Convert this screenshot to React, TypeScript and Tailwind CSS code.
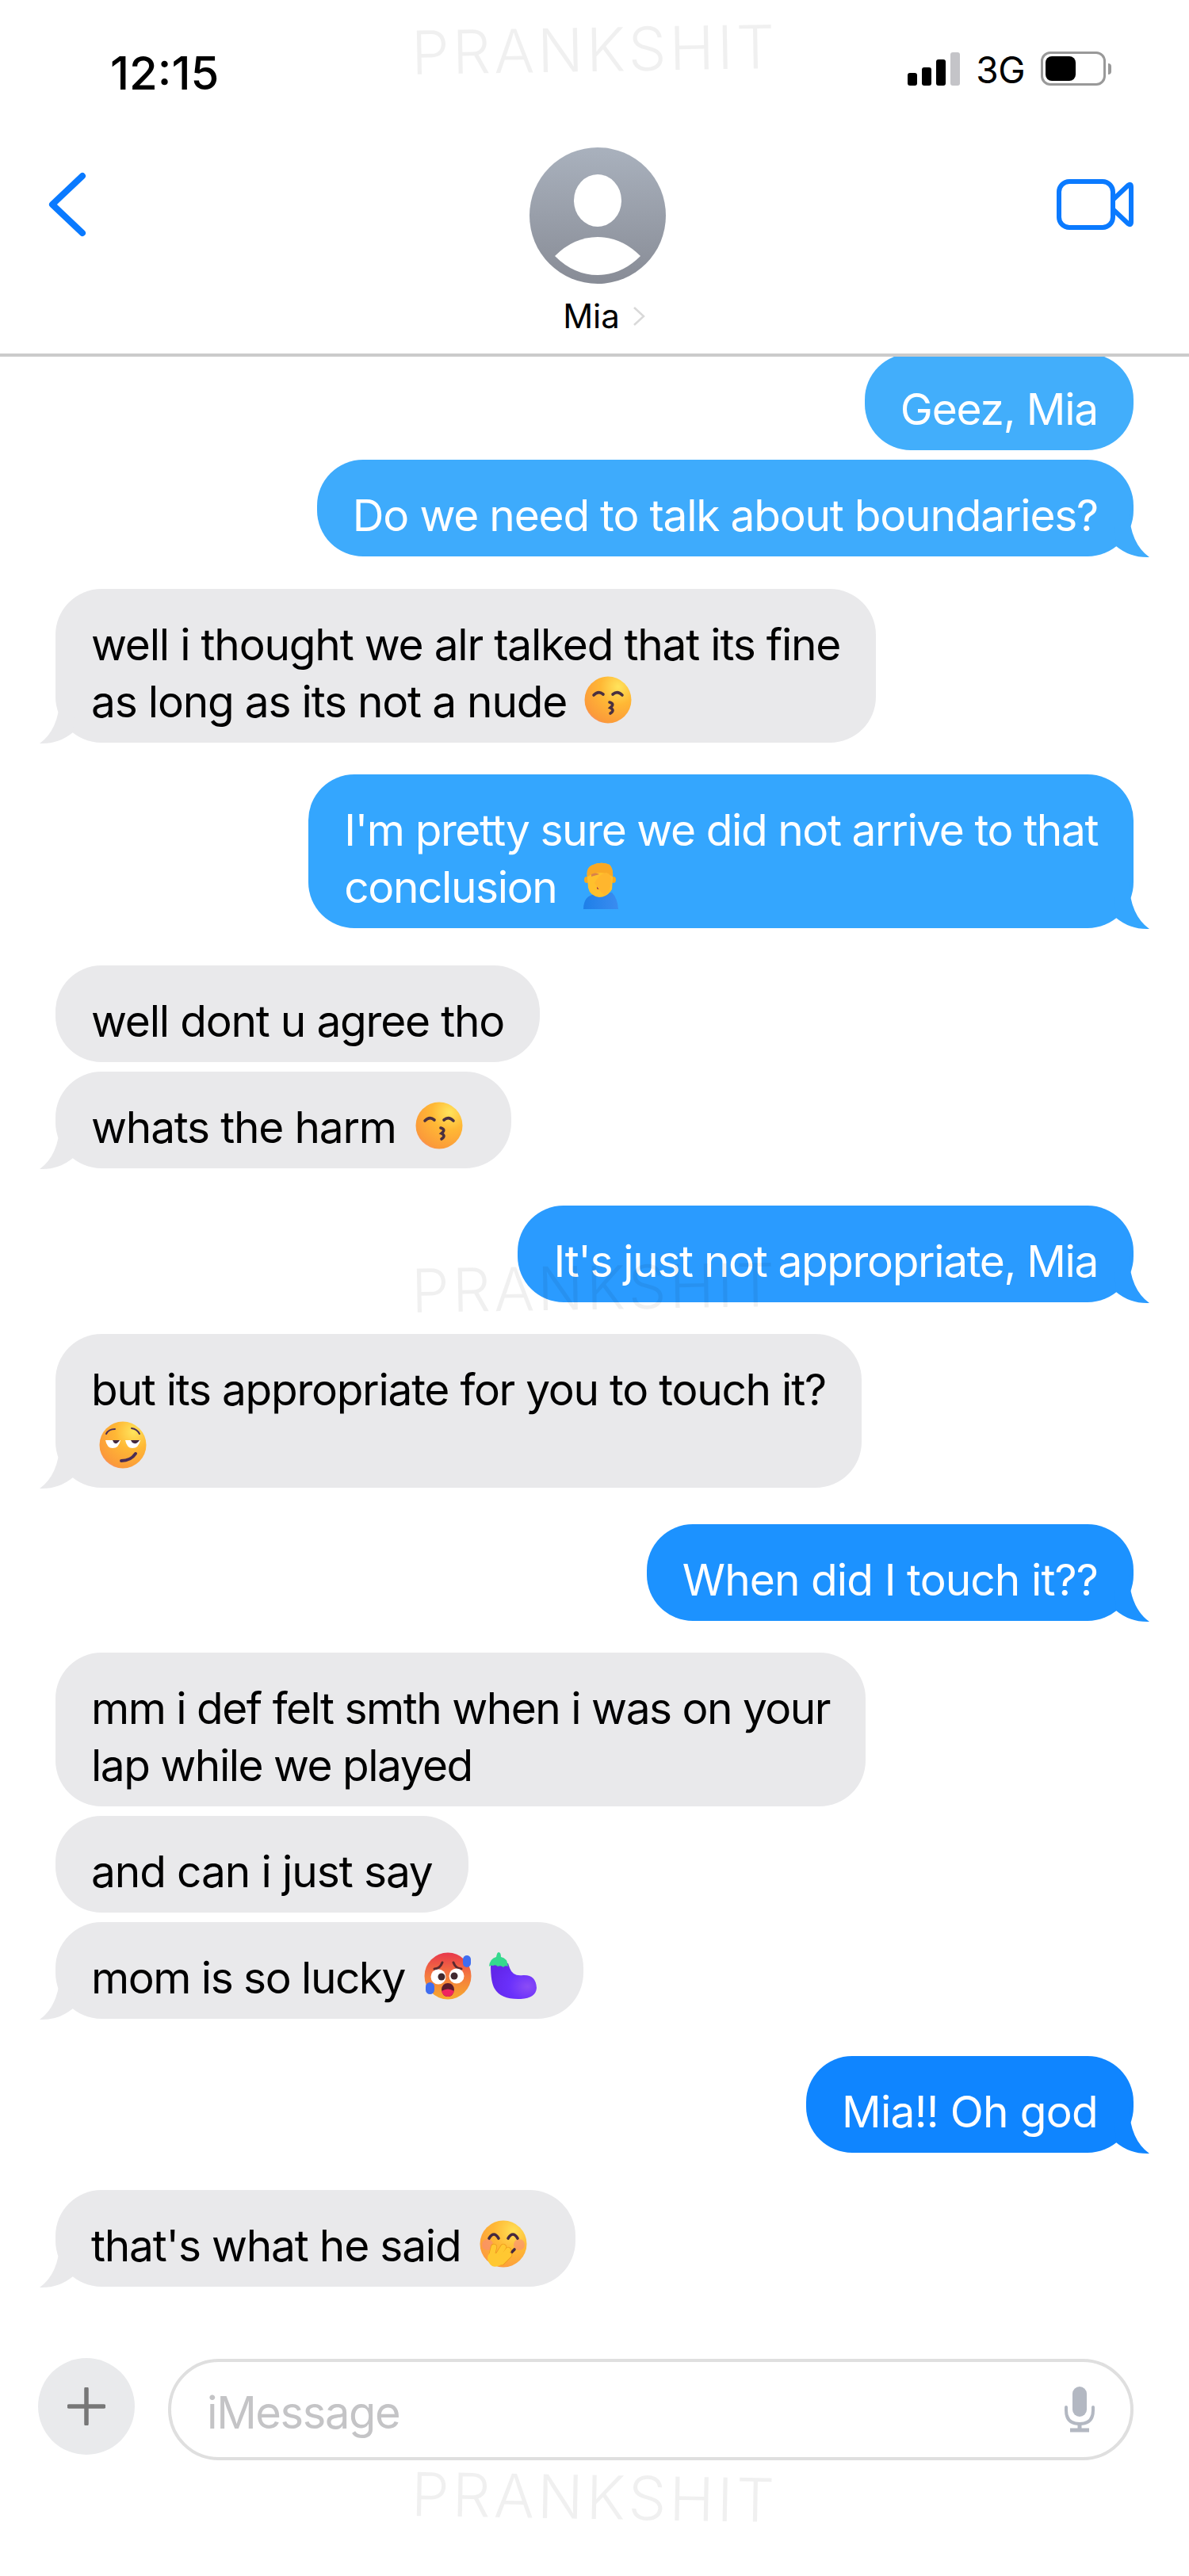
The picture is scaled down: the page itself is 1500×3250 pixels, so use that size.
import React from "react";

type Msg = {
  text: string;
  mine?: boolean;
  bg: string;
  gap: string;
  tr: string;
  tail?: boolean;
  emoji?: React.ReactNode;
};

const Face = ({ id, children }: { id: string; children: React.ReactNode }) => (
  <svg viewBox="0 0 60 60" className="inline-block w-[60px] h-[60px] align-[-8px]">
    <defs>
      <radialGradient id={id} cx="0.72" cy="0.22" r="0.95">
        <stop offset="0" stopColor="#ffe45c" />
        <stop offset="0.4" stopColor="#ffb835" />
        <stop offset="0.85" stopColor="#fb9a3a" />
        <stop offset="1" stopColor="#f47fa0" />
      </radialGradient>
    </defs>
    <circle cx="30" cy="30" r="29.5" fill={`url(#${id})`} />
    {children}
  </svg>
);

const KissFace = ({ id }: { id: string }) => (
  <Face id={id}>
    <g fill="none" stroke="#4a3040" strokeWidth="3.6" strokeLinecap="round">
      <path d="M12 24 Q18 18 24 23" />
      <path d="M36 23 Q42 18 48 24" />
      <path d="M32 33 Q39 35 33 40 Q39 43 33 47" />
    </g>
  </Face>
);

const SmirkFace = () => (
  <Face id="smirk">
    <g fill="none" stroke="#4a2d55" strokeLinecap="round">
      <path d="M9 16 Q12 10 20 10" strokeWidth="2" />
      <path d="M41 9 Q48 10 51 16" strokeWidth="2" />
      <path d="M28 50 Q40 50 46 41" strokeWidth="4" />
    </g>
    <path d="M8 24 H27 Q25 34 17 34 Q10 34 8 24Z" fill="#fff" />
    <path d="M33 24 H52 Q50 34 42 34 Q35 34 33 24Z" fill="#fff" />
    <path d="M17 24 H26 Q23 29 20 28 Q18 27 17 24Z" fill="#43283f" />
    <path d="M40 24 H51 Q48 29 44 28 Q41 27 40 24Z" fill="#43283f" />
  </Face>
);

const HandFace = () => (
  <svg viewBox="0 0 60 60" className="inline-block w-[60px] h-[60px] align-[-8px]">
    <defs>
      <radialGradient id="hand" cx="0.72" cy="0.22" r="0.95">
        <stop offset="0" stopColor="#ffdf55" />
        <stop offset="0.45" stopColor="#ffb835" />
        <stop offset="1" stopColor="#fb9440" />
      </radialGradient>
    </defs>
    <circle cx="30" cy="30" r="29.5" fill="url(#hand)" />
    <circle cx="10" cy="31" r="7" fill="#f88a78" opacity="0.6" />
    <circle cx="50" cy="31" r="7" fill="#f88a78" opacity="0.6" />
    <g fill="none" stroke="#45293f" strokeWidth="3.6" strokeLinecap="round">
      <path d="M12 23 Q18 13 24 23" />
      <path d="M36 23 Q42 13 48 23" />
      <path d="M40 41 L44 37" />
    </g>
    <g fill="none" stroke="#ee9c1e" strokeWidth="8.2" strokeLinecap="round">
      <path d="M15 46 L18 34" />
      <path d="M22 47 L30 34" />
      <path d="M26 50 L36 38" />
      <path d="M28 53 L37 44" />
    </g>
    <g fill="none" stroke="#ffc832" strokeWidth="6.6" strokeLinecap="round">
      <path d="M15 46 L18 34" />
      <path d="M22 47 L30 34" />
      <path d="M26 50 L36 38" />
      <path d="M28 53 L37 44" />
    </g>
    <path d="M10 47 Q11 40 18 41 L30 46 Q33 52 26 57 Q20 60 16 58 Q10 54 10 47Z" fill="#ffc832" />
  </svg>
);

const Facepalm = () => (
  <svg viewBox="0 0 45 59" className="inline-block w-[45px] h-[59px] align-[-8px]">
    <defs>
      <linearGradient id="shirt" x1="0" y1="0" x2="1" y2="0">
        <stop offset="0" stopColor="#1e7fe8" />
        <stop offset="1" stopColor="#3a8cf0" />
      </linearGradient>
    </defs>
    <path d="M0 59 Q0 42 15 40 L36 38 Q43 45 44 59Z" fill="url(#shirt)" />
    <ellipse cx="4" cy="22" rx="3" ry="4" fill="#f6a91f" />
    <ellipse cx="38" cy="22" rx="3" ry="4" fill="#f6a91f" />
    <path d="M5 20 Q3 8 10 4 Q22 -2 33 3 Q38 8 37 20 L36 34 Q30 44 20 44 Q8 42 6 32Z" fill="#ffc02c" />
    <path d="M5 18 Q3 8 10 4 Q22 -2 33 3 Q38 8 37 18 Q22 8 5 18Z" fill="#f9a825" />
    <path d="M10 15 Q16 12 20 15 L10 18Z" fill="#d9824a" />
    <circle cx="19" cy="32" r="2" fill="#8a1050" />
    <path d="M14 26 Q20 14 29 13 Q36 15 35 26 Q33 40 26 41 Q20 36 14 26Z" fill="#ffb62e" />
  </svg>
);

const HotFace = () => (
  <svg viewBox="0 0 60 60" className="inline-block w-[60px] h-[60px] align-[-8px]">
    <defs>
      <linearGradient id="hot" x1="0" y1="0" x2="0" y2="1">
        <stop offset="0" stopColor="#e8384c" />
        <stop offset="0.5" stopColor="#f47a3e" />
        <stop offset="1" stopColor="#f7a92e" />
      </linearGradient>
    </defs>
    <circle cx="30" cy="30" r="29.5" fill="url(#hot)" />
    <g fill="none" stroke="#5a2a30" strokeWidth="3" strokeLinecap="round">
      <path d="M13 21 Q20 21 23 13" />
      <path d="M37 13 Q40 21 47 21" />
    </g>
    <circle cx="18" cy="31" r="9.5" fill="#fff" />
    <circle cx="41" cy="30" r="9.5" fill="#fff" />
    <circle cx="22" cy="31" r="4.5" fill="#41292f" />
    <circle cx="38" cy="30" r="4.5" fill="#41292f" />
    <path d="M22 47 Q23 39 30 39 Q37 39 38 47 Q37 56 30 56 Q23 56 22 47Z" fill="#5c1c2c" />
    <path d="M22 49 Q30 44 38 49 Q36 56 30 56 Q24 56 22 49Z" fill="#f0245f" />
    <rect x="49" y="4" width="10" height="15" rx="5" fill="#3f6df0" />
    <rect x="2" y="38" width="11" height="15" rx="5.5" fill="#3f6df0" />
  </svg>
);

const Eggplant = () => (
  <svg viewBox="0 0 60 60" className="inline-block w-[60px] h-[60px] ml-[22px] mr-[14px] align-[-8px]">
    <defs>
      <radialGradient id="egg" cx="0.8" cy="0.65" r="0.8">
        <stop offset="0" stopColor="#8b4cf6" />
        <stop offset="0.5" stopColor="#6a30fb" />
        <stop offset="1" stopColor="#6226ea" />
      </radialGradient>
    </defs>
    <path d="M2 16 Q2 38 7 46 Q15 60 40 59 Q59 58 60 45 Q59 28 43 29 Q30 31 26 20 L24 14Z" fill="url(#egg)" />
    <path d="M0 18 Q1 8 9 6 Q10 0 12 0 Q15 0 15 6 Q23 7 24 18 Q20 16 18 19 Q15 16 11 18 Q8 15 5 17 Q2 16 0 18Z" fill="#35d98e" />
  </svg>
);

const gray = "bg-[#e9e9eb]";

const messages: Msg[] = [
  { text: "Geez, Mia", mine: true, bg: "bg-[#42aefb]", gap: "-mt-[4px]", tr: "tracking-[-1.2px]" },
  { text: "Do we need to talk about boundaries?", mine: true, bg: "bg-[#3eabfc]", gap: "mt-[12px]", tr: "tracking-[-1.2px]", tail: true },
  {
    text: "well i thought we alr talked that its fine\nas long as its not a nude",
    bg: gray,
    gap: "mt-[41px]",
    tr: "tracking-[-1.2px]",
    tail: true,
    emoji: <span className="ml-[22px]"><KissFace id="kiss1" /></span>,
  },
  {
    text: "I'm pretty sure we did not arrive to that\nconclusion",
    mine: true,
    bg: "bg-[#34a6fe]",
    gap: "mt-[40px]",
    tr: "tracking-[-1.4px]",
    tail: true,
    emoji: <span className="ml-[34px]"><Facepalm /></span>,
  },
  { text: "well dont u agree tho", bg: gray, gap: "mt-[47px]", tr: "tracking-[-1.2px]" },
  {
    text: "whats the harm",
    bg: gray,
    gap: "mt-[12px]",
    tr: "tracking-[-1.2px]",
    tail: true,
    emoji: <span className="ml-[24px] mr-[16px]"><KissFace id="kiss2" /></span>,
  },
  { text: "It's just not appropriate, Mia", mine: true, bg: "bg-[#2a9bff]", gap: "mt-[47px]", tr: "tracking-[-1.35px]", tail: true },
  {
    text: "but its appropriate for you to touch it?\n",
    bg: gray,
    gap: "mt-[40px]",
    tr: "tracking-[-1.25px]",
    tail: true,
    emoji: <span className="ml-[10px]"><SmirkFace /></span>,
  },
  { text: "When did I touch it??", mine: true, bg: "bg-[#1c92ff]", gap: "mt-[46px]", tr: "tracking-[-0.9px]", tail: true },
  { text: "mm i def felt smth when i was on your\nlap while we played", bg: gray, gap: "mt-[40px]", tr: "tracking-[-1.5px]" },
  { text: "and can i just say", bg: gray, gap: "mt-[12px]", tr: "tracking-[-1.1px]" },
  {
    text: "mom is so lucky",
    bg: gray,
    gap: "mt-[12px]",
    tr: "tracking-[-1.5px]",
    tail: true,
    emoji: (
      <>
        <span className="ml-[24px]"><HotFace /></span>
        <Eggplant />
      </>
    ),
  },
  { text: "Mia!! Oh god", mine: true, bg: "bg-[#0f85ff]", gap: "mt-[47px]", tr: "tracking-[-0.7px]", tail: true },
  {
    text: "that's what he said",
    bg: gray,
    gap: "mt-[47px]",
    tr: "tracking-[-1.2px]",
    tail: true,
    emoji: <span className="ml-[24px] mr-[16px]"><HandFace /></span>,
  },
];

const tailFill: Record<string, string> = {
  "bg-[#3eabfc]": "#3eabfc",
  "bg-[#34a6fe]": "#34a6fe",
  "bg-[#2a9bff]": "#2a9bff",
  "bg-[#1c92ff]": "#1c92ff",
  "bg-[#0f85ff]": "#0f85ff",
  "bg-[#e9e9eb]": "#e9e9eb",
};

const Watermark = ({ className }: { className: string }) => (
  <div className={`absolute left-[519px] text-[76px] leading-none font-light tracking-[4px] text-black/[0.06] pointer-events-none ${className}`}>
    PRANKSHIT
  </div>
);

const Bubble = ({ msg }: { msg: Msg }) => (
  <div className={`relative ${msg.gap} ${msg.mine ? "self-end" : "self-start"}`}>
    <div
      className={`rounded-[58px] px-[45px] pt-[34px] pb-[16px] text-[55px] leading-[72px] whitespace-pre ${msg.tr} ${msg.bg} ${msg.mine ? "text-white" : "text-black"}`}
    >
      {msg.text}
      {msg.emoji}
    </div>
    {msg.tail && (
      <svg
        viewBox="0 0 50 60"
        className={`absolute bottom-[-2px] w-[50px] h-[60px] ${msg.mine ? "right-[-20px]" : "left-[-20px] -scale-x-100"}`}
      >
        <path d="M24 0 Q26 42 50 59 Q26 60 8 45 L6 20Z" fill={tailFill[msg.bg]} />
      </svg>
    )}
  </div>
);

const Header = () => (
  <header className="shrink-0">
    {/* status bar */}
    <div className="h-[170px] flex items-start justify-between pl-[139px] pr-[98px] pt-[60px]">
      <span className="text-[58px] leading-[64px] font-medium">12:15</span>
      <div className="flex items-end mt-[4px]">
        <div className="flex items-end gap-[6px]">
          <div className="w-[12px] h-[16px] rounded-[3px] bg-black" />
          <div className="w-[12px] h-[23px] rounded-[3px] bg-black" />
          <div className="w-[12px] h-[33px] rounded-[3px] bg-black" />
          <div className="w-[12px] h-[42px] rounded-[3px] bg-[#c4c4c8]" />
        </div>
        <span className="ml-[20px] text-[46px] leading-[44px] tracking-[-0.5px] translate-y-[2px]">3G</span>
        <div className="ml-[20px] w-[82px] h-[43px] rounded-[12px] border-[3px] border-[#999] p-[3px] pr-0 flex">
          <div className="w-[38px] h-full rounded-[8px] bg-black" />
        </div>
        <div className="ml-[3px] mb-[14px] w-[4px] h-[14px] rounded-r-full bg-[#999]" />
      </div>
    </div>
    {/* nav */}
    <div className="relative h-[280px] border-b-4 border-[#cbcbcb]">
      <svg viewBox="0 0 50 82" className="absolute left-[60px] top-[47px] w-[50px] h-[82px]">
        <path d="M44 5 L6 41 L44 77" fill="none" stroke="#0a7aff" strokeWidth="8" strokeLinecap="round" strokeLinejoin="round" />
      </svg>
      <div className="flex flex-col items-center pt-[16px] pl-[8px]">
        <svg viewBox="0 0 172 172" className="w-[172px] h-[172px]">
          <defs>
            <linearGradient id="avatar" x1="0" y1="0" x2="0" y2="1">
              <stop offset="0" stopColor="#a9b1bd" />
              <stop offset="1" stopColor="#888c96" />
            </linearGradient>
          </defs>
          <circle cx="86" cy="86" r="86" fill="url(#avatar)" />
          <ellipse cx="86" cy="67" rx="30" ry="33" fill="#fff" />
          <path d="M32 137 Q56 113 86 113 Q116 113 140 137 Q116 161 86 161 Q56 161 32 137Z" fill="#fff" />
        </svg>
        <div className="flex items-center mt-[16px] pl-[16px]">
          <span className="text-[42px] leading-[50px]">Mia</span>
          <svg viewBox="0 0 16 26" className="ml-[16px] w-[16px] h-[26px]">
            <path d="M2 2 L14 13 L2 24" fill="none" stroke="#d9d9d9" strokeWidth="2.5" />
          </svg>
        </div>
      </div>
      <svg viewBox="0 0 98 64" className="absolute left-[1333px] top-[56px] w-[98px] h-[64px]">
        <rect x="3" y="3" width="68" height="58" rx="13" fill="none" stroke="#0a7aff" strokeWidth="6" />
        <path d="M71 26 L90 8 Q94 5 94 10 L94 54 Q94 59 90 56 L71 38Z" fill="none" stroke="#0a7aff" strokeWidth="6" strokeLinejoin="round" />
      </svg>
    </div>
  </header>
);

const InputBar = () => (
  <div className="flex items-start pl-[48px] pr-[70px] mt-[86px]">
    <div className="w-[122px] h-[122px] rounded-full bg-[#e9eaec] flex items-center justify-center">
      <svg viewBox="0 0 48 48" className="w-[48px] h-[48px]">
        <path d="M24 2 V46 M2 24 H46" stroke="#777" strokeWidth="5.5" strokeLinecap="round" />
      </svg>
    </div>
    <div className="ml-[42px] mt-[1px] flex-1 h-[128px] rounded-[64px] border-4 border-[#dfdfdf] flex items-center justify-between pl-[45px] pr-[44px]">
      <span className="text-[56px] leading-[72px] tracking-[-1.4px] text-[#c4c4c6] mt-[8px]">iMessage</span>
      <svg viewBox="0 0 40 58" className="w-[40px] h-[58px]">
        <rect x="11" y="0" width="18" height="38" rx="9" fill="#b3b8c2" />
        <path d="M3 26 V30 Q3 47 20 47 Q37 47 37 30 V26" fill="none" stroke="#b3b8c2" strokeWidth="4" strokeLinecap="round" />
        <path d="M20 47 V54 M8 55 H32" stroke="#b3b8c2" strokeWidth="5" />
      </svg>
    </div>
  </div>
);

export default function App() {
  return (
    <div className="relative w-[1500px] h-[3250px] overflow-hidden bg-white text-black flex flex-col [font-family:Inter,sans-serif]">
      <Header />
      <div className="flex flex-col px-[70px] overflow-hidden pb-[4px]">
        {messages.map((m) => (
          <Bubble key={m.text} msg={m} />
        ))}
      </div>
      <InputBar />
      <Watermark className="top-[24px] -rotate-1" />
      <Watermark className="top-[1586px] -rotate-1" />
      <Watermark className="top-[3112px] rotate-1" />
    </div>
  );
}
